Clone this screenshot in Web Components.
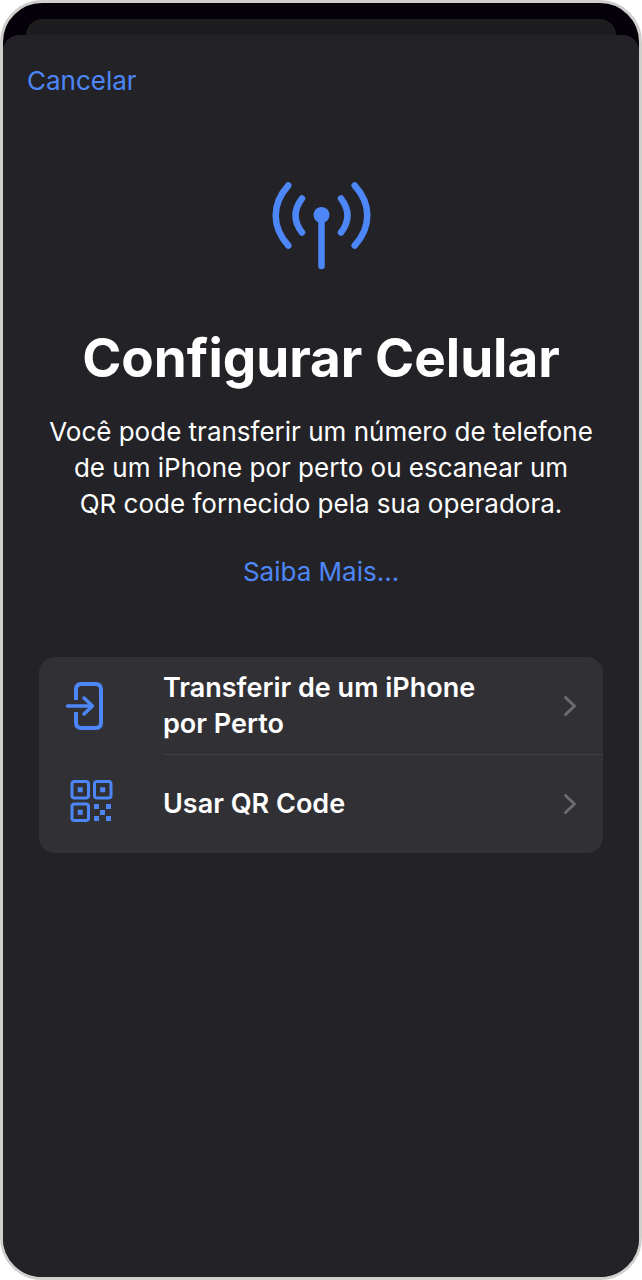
<!DOCTYPE html>
<html lang="pt-BR">
<head>
<meta charset="utf-8">
<meta name="viewport" content="width=device-width, initial-scale=1">
<title>Configurar Celular</title>
<style>
    body {
        margin: 0;
        background: #fff;
        color: #fff;
        font-family: Inter, "Liberation Sans", sans-serif;
        font-size: 26px;
        line-height: 36px;
        --accent: #4d86f7;
        --sheet: #232327;
        --card: #313135;
    }
</style>
</head>
<body>
<phone-screen>
    <nav-action slot="nav" href="#cancelar">Cancelar</nav-action>
    <setup-intro>
        <antenna-icon slot="icon"></antenna-icon>
        <span slot="title">Configurar Celular</span>
        Você pode transferir um número de telefone de um iPhone por perto ou escanear um QR&nbsp;code fornecido pela sua operadora.
        <nav-action slot="more" href="#saiba-mais">Saiba Mais...</nav-action>
    </setup-intro>
    <option-list>
        <option-row>
            <transfer-icon slot="icon"></transfer-icon>
            Transferir de um iPhone por Perto
        </option-row>
        <option-row>
            <qr-icon slot="icon"></qr-icon>
            Usar QR Code
        </option-row>
    </option-list>
</phone-screen>

<script>
class PhoneScreen extends HTMLElement {
    connectedCallback() {
        this.attachShadow({ mode: 'open' });
        this.shadowRoot.innerHTML = `
            <style>
                :host {
                    display: flex;
                    flex-direction: column;
                    box-sizing: border-box;
                    min-height: 100vh;
                    padding-top: 16px;
                    border: 3px solid #cfcfcd;
                    border-radius: 42px;
                    background: #050009;
                    overflow: hidden;
                }

                .behind {
                    height: 16px;
                    margin: 0 23px;
                    border-radius: 16px 16px 0 0;
                    background: #1d1d1f;
                }

                .sheet {
                    flex: 1;
                    padding: 28px 36px 36px;
                    border-radius: 16px 16px 0 0;
                    background: var(--sheet);
                }

                header {
                    display: flex;
                    margin: 0 -12px 83px;
                }
            </style>

            <div class="behind"></div>
            <div class="sheet">
                <header><slot name="nav"></slot></header>
                <main><slot></slot></main>
            </div>
        `;
    }
}

class NavAction extends HTMLElement {
    connectedCallback() {
        this.attachShadow({ mode: 'open' });
        this.shadowRoot.innerHTML = `
            <style>
                :host {
                    display: inline-block;
                }

                a {
                    color: var(--accent);
                    text-decoration: none;
                }
            </style>

            <a href="${this.getAttribute('href')}"><slot></slot></a>
        `;
    }
}

class SetupIntro extends HTMLElement {
    connectedCallback() {
        this.attachShadow({ mode: 'open' });
        this.shadowRoot.innerHTML = `
            <style>
                :host {
                    display: flex;
                    flex-direction: column;
                    align-items: center;
                    margin-bottom: 67px;
                    text-align: center;
                }

                h1 {
                    margin: 56px 0 24px;
                    font-size: 53px;
                    line-height: 64px;
                    font-weight: 700;
                }

                p {
                    max-width: 560px;
                    margin: 0 0 32px;
                }
            </style>

            <slot name="icon"></slot>
            <h1><slot name="title"></slot></h1>
            <p><slot></slot></p>
            <slot name="more"></slot>
        `;
    }
}

class OptionList extends HTMLElement {
    connectedCallback() {
        this.attachShadow({ mode: 'open' });
        this.shadowRoot.innerHTML = `
            <style>
                :host {
                    display: block;
                    border-radius: 16px;
                    background: var(--card);
                    overflow: hidden;
                }

                ::slotted(option-row:not(:last-child)) {
                    --divider: #3f3f43;
                }
            </style>

            <slot></slot>
        `;
    }
}

class OptionRow extends HTMLElement {
    connectedCallback() {
        this.attachShadow({ mode: 'open' });
        this.shadowRoot.innerHTML = `
            <style>
                :host {
                    display: block;
                }

                button {
                    display: grid;
                    grid-template-columns: 98px 1fr;
                    width: 100%;
                    padding: 0 0 0 26px;
                    border: 0;
                    background: none;
                    color: inherit;
                    font: inherit;
                    font-size: 27px;
                    font-weight: 600;
                    text-align: left;
                    cursor: pointer;
                }

                .icon {
                    display: flex;
                    align-items: center;
                }

                .body {
                    display: flex;
                    align-items: center;
                    justify-content: space-between;
                    box-sizing: border-box;
                    min-height: 98px;
                    padding: 12px 26px 12px 0;
                    border-bottom: 1px solid var(--divider, transparent);
                }

                .label {
                    max-width: 340px;
                }

                svg {
                    flex: none;
                }
            </style>

            <button type="button">
                <span class="icon"><slot name="icon"></slot></span>
                <span class="body">
                    <span class="label"><slot></slot></span>
                    <svg width="14" height="22" viewBox="0 0 14 22" fill="none" stroke="#6b6b70" stroke-width="3" stroke-linecap="round" stroke-linejoin="round" aria-hidden="true">
                        <path d="M2.500 2.500l9 8.500-9 8.500"/>
                    </svg>
                </span>
            </button>
        `;
    }
}

class AntennaIcon extends HTMLElement {
    connectedCallback() {
        this.attachShadow({ mode: 'open' });
        this.shadowRoot.innerHTML = `
            <style>
                :host, svg {
                    display: block;
                }

                svg {
                    fill: none;
                    stroke: var(--accent);
                    stroke-width: 6.500;
                    stroke-linecap: round;
                }

                circle {
                    fill: var(--accent);
                    stroke: none;
                }
            </style>

            <svg width="100" height="88" viewBox="0 0 100 88" aria-hidden="true">
                <circle cx="50.500" cy="33" r="8"/>
                <path d="M50.500 36v48"/>
                <path d="M31 16.500Q18 33.500 31 50.500M70 16.500Q83 33.500 70 50.500"/>
                <path d="M17.300 3.500C0.500 22 0.500 45 17.300 63.500M83.700 3.500C100.500 22 100.500 45 83.700 63.500"/>
            </svg>
        `;
    }
}

class TransferIcon extends HTMLElement {
    connectedCallback() {
        this.attachShadow({ mode: 'open' });
        this.shadowRoot.innerHTML = `
            <style>
                :host, svg {
                    display: block;
                }

                svg {
                    fill: none;
                    stroke: var(--accent);
                    stroke-width: 3.500;
                    stroke-linecap: round;
                    stroke-linejoin: round;
                }

                .case {
                    stroke-width: 4;
                    stroke-linecap: butt;
                }
            </style>

            <svg width="39" height="48" viewBox="0 0 39 48" aria-hidden="true">
                <path class="case" d="M11 18V7.500q0-5.500 5.500-5.500h14q5.500 0 5.500 5.500v33q0 5.500-5.500 5.500h-14q-5.500 0-5.500-5.500V30"/>
                <path d="M2.500 24h25M19 16l8.500 8-8.500 8"/>
            </svg>
        `;
    }
}

class QrIcon extends HTMLElement {
    connectedCallback() {
        this.attachShadow({ mode: 'open' });
        this.shadowRoot.innerHTML = `
            <style>
                :host {
                    display: block;
                    padding: 0 0 6px 5px;
                }

                svg {
                    display: block;
                    fill: var(--accent);
                }

                .finder {
                    fill: none;
                    stroke: var(--accent);
                    stroke-width: 3;
                }
            </style>

            <svg width="43" height="42" viewBox="0 0 43 42" aria-hidden="true">
                <g class="finder">
                    <rect x="2" y="1.500" width="16.500" height="16.500" rx="2.500"/>
                    <rect x="24.500" y="1.500" width="16.500" height="16.500" rx="2.500"/>
                    <rect x="2" y="24" width="16.500" height="16.500" rx="2.500"/>
                </g>
                <path d="M7.700 7.200h5v5h-5zM30.200 7.200h5v5h-5zM7.700 29.700h5v5h-5z"/>
                <path d="M24 24h5v5h-5zM36 24h5v5h-5zM30 30h5v5h-5zM24 36h5v5h-5zM36 36h5v5h-5z"/>
            </svg>
        `;
    }
}

customElements.define('phone-screen', PhoneScreen);
customElements.define('nav-action', NavAction);
customElements.define('setup-intro', SetupIntro);
customElements.define('option-list', OptionList);
customElements.define('option-row', OptionRow);
customElements.define('antenna-icon', AntennaIcon);
customElements.define('transfer-icon', TransferIcon);
customElements.define('qr-icon', QrIcon);
</script>
</body>
</html>
